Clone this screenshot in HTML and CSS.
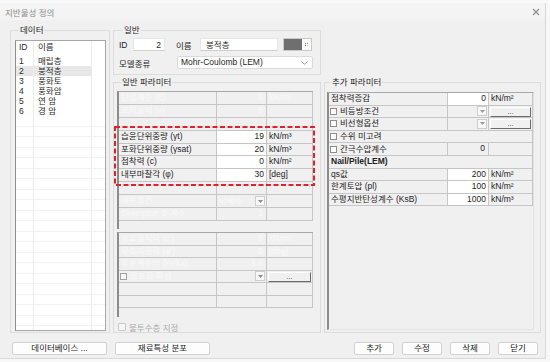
FILE: index.html
```html
<!DOCTYPE html>
<html lang="ko">
<head>
<meta charset="utf-8">
<title>지반물성 정의</title>
<link rel="stylesheet" href="styles.css">
</head>
<body>
<div class="window">
  <div class="titlebar">
    <span class="title">지반물성 정의</span>
    <svg class="close" width="8" height="8" viewBox="0 0 8 8"><path d="M1 1L7 7M7 1L1 7" stroke="#8a8a8a" stroke-width="1.1"/></svg>
  </div>
  <div class="content">
    <div class="main">
      <fieldset class="grp grp-data">
        <legend>데이터</legend>
        <div class="listbox">
          <div class="lrow lhead"><span>ID</span><span>이름</span><span></span></div>
          <div class="lrow"><span>1</span><span>매립층</span><span></span></div>
          <div class="lrow sel"><span>2</span><span>붕적층</span><span></span></div>
          <div class="lrow"><span>3</span><span>풍화토</span><span></span></div>
          <div class="lrow"><span>4</span><span>풍화암</span><span></span></div>
          <div class="lrow"><span>5</span><span>연 암</span><span></span></div>
          <div class="lrow"><span>6</span><span>경 암</span><span></span></div>
          <div class="lrow empty"><span></span><span></span><span></span></div>
          <div class="lrow empty"><span></span><span></span><span></span></div>
          <div class="lrow empty"><span></span><span></span><span></span></div>
          <div class="lrow empty"><span></span><span></span><span></span></div>
          <div class="lrow empty"><span></span><span></span><span></span></div>
          <div class="lrow empty"><span></span><span></span><span></span></div>
          <div class="lrow empty"><span></span><span></span><span></span></div>
          <div class="lrow empty"><span></span><span></span><span></span></div>
          <div class="lrow empty"><span></span><span></span><span></span></div>
          <div class="lrow empty"><span></span><span></span><span></span></div>
          <div class="lrow empty"><span></span><span></span><span></span></div>
          <div class="lrow empty"><span></span><span></span><span></span></div>
          <div class="lrow empty"><span></span><span></span><span></span></div>
          <div class="lrow empty"><span></span><span></span><span></span></div>
          <div class="lrow empty"><span></span><span></span><span></span></div>
          <div class="lrow empty"><span></span><span></span><span></span></div>
          <div class="lrow empty"><span></span><span></span><span></span></div>
          <div class="lrow empty"><span></span><span></span><span></span></div>
          <div class="lrow empty"><span></span><span></span><span></span></div>
          <div class="lrow empty"><span></span><span></span><span></span></div>
          <div class="lrow empty"><span></span><span></span><span></span></div>
          <div class="lrow empty"><span></span><span></span><span></span></div>
        </div>
      </fieldset>

      <fieldset class="grp grp-gen">
        <legend>일반</legend>
        <div class="gen-row">
          <span class="lbl lbl-id">ID</span>
          <span class="field field-id">2</span>
          <span class="lbl lbl-name">이름</span>
          <span class="field field-name">붕적층</span>
          <span class="colorbtn">
            <span class="swatch"></span>
            <span class="picker"><svg width="7" height="9" viewBox="0 0 7 9"><rect x="2" y="3" width="1" height="1" fill="#e23b3b"/><rect x="4" y="3" width="1" height="1" fill="#3cb44b"/><rect x="2" y="5" width="1" height="1" fill="#3b6be2"/><rect x="4" y="5" width="1" height="1" fill="#e2c23b"/></svg></span>
          </span>
        </div>
        <div class="gen-row row-model">
          <span class="lbl lbl-model">모델종류</span>
          <span class="combo"><span>Mohr-Coulomb (LEM)</span><svg width="7" height="4" viewBox="0 0 7 4"><path d="M0.5 0.5L3.5 3.2L6.5 0.5" fill="none" stroke="#8a8a8a" stroke-width="0.9"/></svg></span>
        </div>
      </fieldset>

      <fieldset class="grp grp-param">
        <legend>일반 파라미터</legend>
        <div class="annot-wrap">
          <div class="gbox gbox-1">
            <div class="trow"><span class="c faded">탄성계수 (E)</span><span class="c num faded">0</span><span class="c faded">kN/m²</span></div>
            <div class="trow"><span class="c faded">포아송비 (ν)</span><span class="c num faded">0</span><span class="c"></span></div>
            <div class="trow"><span class="c"></span><span class="c"></span><span class="c"></span></div>
            <div class="trow"><span class="c">습윤단위중량 (γt)</span><span class="c val">19</span><span class="c unit">kN/m³</span></div>
            <div class="trow"><span class="c">포화단위중량 (γsat)</span><span class="c val">20</span><span class="c unit">kN/m³</span></div>
            <div class="trow"><span class="c">점착력 (c)</span><span class="c val">0</span><span class="c unit">kN/m²</span></div>
            <div class="trow"><span class="c">내부마찰각 (φ)</span><span class="c val">30</span><span class="c unit">[deg]</span></div>
            <div class="trow"><span class="c"></span><span class="c"></span><span class="c"></span></div>
            <div class="trow"><span class="c faded">배수조건</span><span class="c dd"><span class="faded">비배수</span><span class="ddbtn"><svg width="5" height="3" viewBox="0 0 5 3"><path d="M0 0H5L2.5 3Z" fill="#8c8c8c"/></svg></span></span><span class="c"></span></div>
            <div class="trow"><span class="c faded">Skempton B 계수</span><span class="c num faded">1</span><span class="c"></span></div>
          </div>
          <svg class="annot" width="201" height="60" viewBox="0 0 201 60"><rect x="1" y="1" width="199" height="58" fill="none" stroke="#e3202b" stroke-width="2" stroke-dasharray="5 2.5"/></svg>
        </div>
        <div class="gbox gbox-2">
          <div class="trow"><span class="c faded">유효점착력 (c')</span><span class="c num faded">0</span><span class="c faded">kN/m²</span></div>
          <div class="trow"><span class="c faded">유효마찰각 (φ')</span><span class="c num faded">0</span><span class="c faded">[deg]</span></div>
          <div class="trow"><span class="c faded">투수계수비 (ky/kx)</span><span class="c num faded">1.0</span><span class="c"></span></div>
          <div class="trow"><span class="c chk-cell"><span class="chk chk-dis"></span><span class="faded">불포화 특성</span></span><span class="c dd"><span></span><span class="ddbtn"><svg width="5" height="3" viewBox="0 0 5 3"><path d="M0 0H5L2.5 3Z" fill="#8c8c8c"/></svg></span></span><span class="c btncell"><span class="dots">...</span></span></div>
          <div class="trow"><span class="c"></span><span class="c"></span><span class="c"></span></div>
          <div class="trow"><span class="c"></span><span class="c"></span><span class="c"></span></div>
        </div>
        <div class="check-row"><span class="chk chk-light"></span><span class="dis-text">불투수층 지정</span></div>
      </fieldset>

      <fieldset class="grp grp-extra">
        <legend>추가 파라미터</legend>
        <div class="gbox gbox-r">
          <div class="trow"><span class="c">점착력증감</span><span class="c val">0</span><span class="c unit">kN/m²</span></div>
          <div class="trow"><span class="c chk-cell"><span class="chk"></span><span>비등방조건</span></span><span class="c dd"><span></span><span class="ddbtn"><svg width="5" height="3" viewBox="0 0 5 3"><path d="M0 0H5L2.5 3Z" fill="#9a9a9a"/></svg></span></span><span class="c btncell"><span class="dots">...</span></span></div>
          <div class="trow"><span class="c chk-cell"><span class="chk"></span><span>비선형옵션</span></span><span class="c dd"><span></span><span class="ddbtn"><svg width="5" height="3" viewBox="0 0 5 3"><path d="M0 0H5L2.5 3Z" fill="#9a9a9a"/></svg></span></span><span class="c btncell"><span class="dots">...</span></span></div>
          <div class="trow"><span class="c span chk-cell"><span class="chk"></span><span>수위 미고려</span></span></div>
          <div class="trow"><span class="c chk-cell"><span class="chk"></span><span>간극수압계수</span></span><span class="c num">0</span><span class="c"></span></div>
          <div class="trow"><span class="c span bold">Nail/Pile(LEM)</span></div>
          <div class="trow"><span class="c">qs값</span><span class="c val">200</span><span class="c unit">kN/m²</span></div>
          <div class="trow"><span class="c">한계토압 (pl)</span><span class="c val">100</span><span class="c unit">kN/m²</span></div>
          <div class="trow"><span class="c">수평지반탄성계수 (KsB)</span><span class="c val">1000</span><span class="c unit">kN/m³</span></div>
        </div>
      </fieldset>
    </div>

    <div class="btnrow">
      <div class="btngroup">
        <span class="btn btn-wide">데이터베이스 ...</span>
        <span class="btn btn-wide">재료특성 분포</span>
      </div>
      <div class="btngroup">
        <span class="btn">추가</span>
        <span class="btn">수정</span>
        <span class="btn">삭제</span>
        <span class="btn">닫기</span>
      </div>
    </div>
  </div>
</div>
</body>
</html>
```

FILE: styles.css
```css
* { box-sizing: border-box; }
html, body { margin: 0; padding: 0; }
body {
  width: 550px;
  height: 362px;
  overflow: hidden;
  padding-top: 3px;
  background: #f8f8f8;
  font-family: "Liberation Sans", "Noto Sans CJK KR", sans-serif;
  font-size: 8.5px;
  color: #1e1e1e;
}
.window {
  width: 546px;
  height: 356px;
  background: #f0f0f0;
  border-right: 1px solid #d8d8d8;
  border-bottom: 1px solid #d8d8d8;
}
.titlebar {
  height: 17px;
  background: #f4f4f4;
  display: flex;
  align-items: center;
  justify-content: space-between;
  padding: 0 5px 0 5px;
  color: #8b8b8b;
}
.content { padding: 5px 7px 0 10px; }
.main {
  display: grid;
  grid-template-columns: 100px 208px 217px;
  grid-template-rows: 50px 256px;
  column-gap: 3px;
  row-gap: 2px;
}

/* group boxes */
.grp {
  margin: 0;
  min-width: 0;
  border: 1px solid #dcdcdc;
  padding: 0;
}
.grp > legend {
  font-size: 8.5px;
  line-height: 11px;
  padding: 0 1px;
  margin-left: 4px;
  color: #1e1e1e;
}
.grp-data { grid-row: 1 / 3; grid-column: 1; padding: 4px 3px 1px 4px; }
.grp-gen { grid-row: 1; grid-column: 2; padding: 2px 6px 5px 5px; }
.grp-param { grid-row: 2; grid-column: 2; padding: 3px 7px 0 3px; }
.grp-extra { grid-row: 2; grid-column: 3; padding: 4px 6px 2px 2px; }

/* data list */
.listbox {
  height: 291px;
  background: #fff;
  border: 1px solid #a6a6a6;
  border-left-color: #8e8e8e;
  overflow: hidden;
  color: #2a2a2a;
}
.lrow {
  display: grid;
  grid-template-columns: 18px 58px 1fr;
  height: 10px;
  line-height: 10px;
}
.lrow > span { border-right: 1px solid #ececec; white-space: nowrap; }
.lrow > span:first-child { padding-left: 3px; }
.lrow > span:nth-child(2) { padding-left: 4px; }
.lrow > span:last-child { border-right: none; }
.lhead { height: 15px; line-height: 13px; }
.sel > span:nth-child(-n+2) { background: #e7e7e7; }
.lrow.empty { height: 10.5px; border-bottom: 1px solid #f1f1f1; }

/* general group */
.gen-row { display: flex; align-items: center; height: 13px; }
.row-model { margin-top: 5px; }
.lbl { flex: none; white-space: nowrap; }
.lbl-id { width: 14px; }
.lbl-name { width: 24px; margin-left: 11px; }
.lbl-model { width: 58px; }
.field {
  flex: none;
  height: 13px;
  line-height: 12px;
  background: #fff;
  border: 1px solid #e6e6e6;
  border-bottom-color: #cfcfcf;
}
.field-id { width: 32px; text-align: right; padding-right: 3px; }
.field-name { width: 78px; padding-left: 5px; }
.colorbtn {
  flex: none;
  width: 29px;
  height: 13px;
  margin-left: 5px;
  display: flex;
  border: 1px solid #c9c9c9;
}
.swatch { flex: 1; background: #6f6f6f; }
.picker { width: 9px; background: #fbfbfb; display: flex; align-items: center; justify-content: center; }
.combo {
  flex: none;
  width: 136px;
  height: 13px;
  background: #fff;
  border: 1px solid #dadada;
  border-radius: 2px;
  display: flex;
  align-items: center;
  justify-content: space-between;
  padding: 0 4px 0 3px;
  line-height: 11px;
}

/* grid boxes */
.annot-wrap { position: relative; }
.annot { position: absolute; left: -3px; top: 35px; }
.gbox {
  background: #f0f0f0;
  border-left: 2px solid #8c8c8c;
  border-top: 1px solid #a8a8a8;
  overflow: hidden;
}
.gbox-1 { width: 196px; height: 138px; --rh: 12.9px; }
.gbox-2 { width: 196px; height: 85px; margin-top: 3px; --rh: 12.5px; }
.gbox-1 .trow, .gbox-2 .trow { grid-template-columns: 98px 50px 46px; }
.gbox-r {
  width: 207px;
  height: 238px;
  --rh: 12.6px;
  border-right: 1px solid #e2e2e2;
  border-bottom: 1px solid #e2e2e2;
}
.gbox-r .trow { grid-template-columns: 119px 41px 44px; }
.trow {
  display: grid;
  height: var(--rh);
  border-bottom: 1px solid #c6c6c6;
}
.c {
  border-right: 1px solid #c6c6c6;
  padding: 0 2px;
  line-height: 11px;
  white-space: nowrap;
  overflow: hidden;
}
.c.span { grid-column: 1 / -1; }
.val { background: #fff; text-align: right; padding-right: 2px; }
.num { text-align: right; padding-right: 3px; }
.unit { padding-left: 2px; }
.bold { font-weight: bold; }
.faded { color: #f9f9f9; }
.dd { display: flex; justify-content: space-between; align-items: center; padding-right: 1px; }
.ddbtn {
  width: 10px;
  height: 10px;
  border: 1px solid #cdcdcd;
  background: #f7f7f7;
  display: flex;
  align-items: center;
  justify-content: center;
}
.btncell { padding: 1px 1px 0 1px; }
.dots {
  display: block;
  height: 10px;
  border: 1px solid;
  border-color: #ffffff #6b6b6b #6b6b6b #ffffff;
  background: #f0f0f0;
  text-align: center;
  font-size: 7px;
  line-height: 7px;
  color: #333;
}
.chk-cell { display: flex; align-items: center; gap: 3px; padding-left: 1px; }
.chk {
  flex: none;
  width: 7px;
  height: 7px;
  border: 1px solid #8d8d8d;
  background: #fff;
}
.chk-dis { border-color: #a2a2a2; background: #f7f7f7; }
.check-row {
  display: flex;
  align-items: center;
  gap: 3px;
  height: 10px;
  margin-top: 5px;
  padding-left: 1px;
}
.chk-light { width: 8px; height: 8px; border-color: #c8c8c8; background: #f7f7f7; border-radius: 1px; }
.dis-text { color: #ababab; }

/* bottom buttons */
.btnrow {
  display: flex;
  justify-content: space-between;
  margin-top: 9px;
  padding-left: 2px;
}
.btngroup { display: flex; gap: 8px; }
.btn {
  width: 40px;
  height: 13px;
  line-height: 11px;
  text-align: center;
  background: #fdfdfd;
  border: 1px solid #d2d2d2;
  border-radius: 2px;
  color: #1a1a1a;
}
.btn-wide { width: 95px; }
```
